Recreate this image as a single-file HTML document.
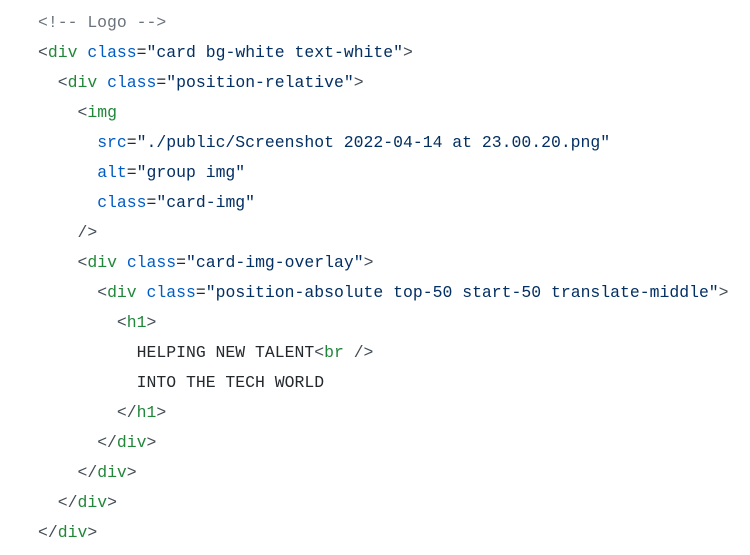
<!DOCTYPE html>
<html><head><style>
html,body{margin:0;padding:0;background:#fff;width:750px;height:555px;overflow:hidden}
pre{margin:0;position:absolute;left:38px;top:8px;font-family:"Liberation Mono",monospace;font-size:16.45px;line-height:30px;color:#24292e}
.c{color:#6a737d}.t{color:#22863a}.a{color:#005cc5}.s{color:#032f62}.p{color:#444d56}
</style></head><body>
<pre><span class="c">&lt;!-- Logo --&gt;</span>
<span class="p">&lt;</span><span class="t">div</span> <span class="a">class</span>=<span class="s">"card bg-white text-white"</span><span class="p">&gt;</span>
  <span class="p">&lt;</span><span class="t">div</span> <span class="a">class</span>=<span class="s">"position-relative"</span><span class="p">&gt;</span>
    <span class="p">&lt;</span><span class="t">img</span>
      <span class="a">src</span>=<span class="s">"./public/Screenshot 2022-04-14 at 23.00.20.png"</span>
      <span class="a">alt</span>=<span class="s">"group img"</span>
      <span class="a">class</span>=<span class="s">"card-img"</span>
    <span class="p">/&gt;</span>
    <span class="p">&lt;</span><span class="t">div</span> <span class="a">class</span>=<span class="s">"card-img-overlay"</span><span class="p">&gt;</span>
      <span class="p">&lt;</span><span class="t">div</span> <span class="a">class</span>=<span class="s">"position-absolute top-50 start-50 translate-middle"</span><span class="p">&gt;</span>
        <span class="p">&lt;</span><span class="t">h1</span><span class="p">&gt;</span>
          HELPING NEW TALENT<span class="p">&lt;</span><span class="t">br</span> <span class="p">/&gt;</span>
          INTO THE TECH WORLD
        <span class="p">&lt;/</span><span class="t">h1</span><span class="p">&gt;</span>
      <span class="p">&lt;/</span><span class="t">div</span><span class="p">&gt;</span>
    <span class="p">&lt;/</span><span class="t">div</span><span class="p">&gt;</span>
  <span class="p">&lt;/</span><span class="t">div</span><span class="p">&gt;</span>
<span class="p">&lt;/</span><span class="t">div</span><span class="p">&gt;</span></pre>
</body></html>
